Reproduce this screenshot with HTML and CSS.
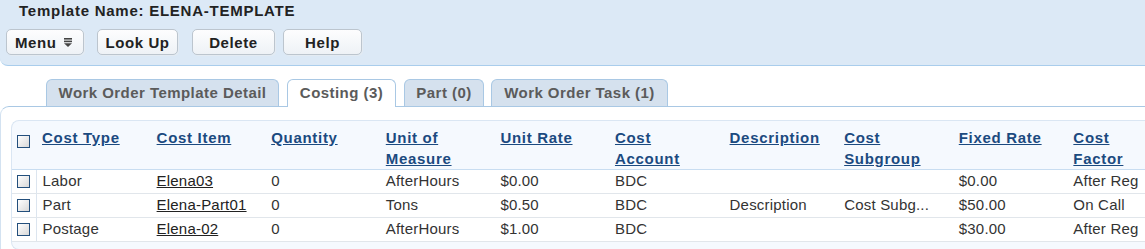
FILE: index.html
```html
<!DOCTYPE html>
<html lang="en">
<head>
    <meta charset="utf-8"/>
    <title>Work Order Template - Costing</title>
    <link rel="stylesheet" href="styles.css">
</head>
<body>
<div class="headerPanel">
    <div class="title">Template Name: ELENA-TEMPLATE</div>
    <div class="toolbar">
        <button class="btn btnMenu">Menu
            <svg class="menuIcon" width="8" height="9" viewBox="0 0 8 9">
                <rect x="0" y="0" width="8" height="1.6" fill="#444"/>
                <rect x="0" y="2.6" width="8" height="1.6" fill="#444"/>
                <polygon points="0,5.2 8,5.2 4,9" fill="#444"/>
            </svg>
        </button>
        <button class="btn btnLookUp">Look Up</button>
        <button class="btn btnDelete">Delete</button>
        <button class="btn btnHelp">Help</button>
    </div>
</div>

<div class="tabs">
    <div class="tab tabDetail">Work Order Template Detail</div>
    <div class="tab tabActive tabCosting">Costing (3)</div>
    <div class="tab tabPart">Part (0)</div>
    <div class="tab tabTask">Work Order Task (1)</div>
</div>

<div class="content">
    <div class="gridPanel">
        <table class="grid">
            <colgroup>
                <col class="colCheck">
                <col span="9" class="colData">
                <col class="colLast">
            </colgroup>
            <thead>
            <tr>
                <th class="checkCell"><span class="check"></span></th>
                <th><a href="#">Cost Type</a></th>
                <th><a href="#">Cost Item</a></th>
                <th><a href="#">Quantity</a></th>
                <th><a href="#">Unit of Measure</a></th>
                <th><a href="#">Unit Rate</a></th>
                <th><a href="#">Cost Account</a></th>
                <th><a href="#">Description</a></th>
                <th><a href="#">Cost Subgroup</a></th>
                <th><a href="#">Fixed Rate</a></th>
                <th><a href="#">Cost Factor</a></th>
            </tr>
            </thead>
            <tbody>
            <tr>
                <td class="checkCell"><span class="check"></span></td>
                <td>Labor</td>
                <td><a href="#">Elena03</a></td>
                <td>0</td>
                <td>AfterHours</td>
                <td>$0.00</td>
                <td>BDC</td>
                <td></td>
                <td></td>
                <td>$0.00</td>
                <td>After Reg</td>
            </tr>
            <tr>
                <td class="checkCell"><span class="check"></span></td>
                <td>Part</td>
                <td><a href="#">Elena-Part01</a></td>
                <td>0</td>
                <td>Tons</td>
                <td>$0.50</td>
                <td>BDC</td>
                <td>Description</td>
                <td>Cost Subg...</td>
                <td>$50.00</td>
                <td>On Call</td>
            </tr>
            <tr>
                <td class="checkCell"><span class="check"></span></td>
                <td>Postage</td>
                <td><a href="#">Elena-02</a></td>
                <td>0</td>
                <td>AfterHours</td>
                <td>$1.00</td>
                <td>BDC</td>
                <td></td>
                <td></td>
                <td>$30.00</td>
                <td>After Reg</td>
            </tr>
            </tbody>
        </table>
    </div>
</div>
</body>
</html>
```

FILE: styles.css
```css
body{
    margin: 0;
    width: 1145px;
    overflow: hidden;
    font-family: "Liberation Sans", Arial, sans-serif;
    font-size: 15px;
    letter-spacing: 0.2px;
    color: #333;
    background: #fff;
}
.headerPanel{
    background: #dce9f6;
    border-bottom: 1px solid #a9cdec;
    border-bottom-left-radius: 8px;
    padding: 2px 0 10px 0;
}
.title{
    font-weight: bold;
    letter-spacing: 0.75px;
    line-height: 18px;
    padding-left: 19px;
    color: #222;
}
.toolbar{
    display: flex;
    margin-top: 9px;
    padding-left: 6px;
}
.btn{
    height: 26px;
    font-family: inherit;
    font-size: 15px;
    font-weight: bold;
    letter-spacing: 0.6px;
    color: #222;
    background: linear-gradient(#fdfdfe, #eef2f6);
    border: 1px solid #bcc5ce;
    border-radius: 5px;
    box-shadow: 1px 1px 0 #e4ebf2;
    padding: 0;
    display: flex;
    align-items: center;
    justify-content: center;
}
.btnMenu{
    width: 78px;
    justify-content: flex-start;
    padding-left: 8px;
}
.menuIcon{
    margin-left: 7px;
    margin-top: 1px;
}
.btnLookUp{
    width: 81px;
    margin-left: 13px;
}
.btnDelete{
    width: 83px;
    margin-left: 14px;
}
.btnHelp{
    width: 79px;
    margin-left: 8px;
}
.tabs{
    display: flex;
    margin-top: 13px;
    padding-left: 46px;
    gap: 8px;
    position: relative;
    z-index: 1;
}
.tab{
    height: 21px;
    line-height: 16px;
    padding: 5px 0 0 0;
    text-align: center;
    font-weight: bold;
    letter-spacing: 0.45px;
    color: #5b5b5b;
    background: #d5e1ee;
    border: 1px solid #a9c8e4;
    border-bottom: none;
    border-top-left-radius: 6px;
    border-top-right-radius: 6px;
    margin-bottom: -1px;
}
.tabActive{
    background: #fff;
    height: 22px;
}
.tabDetail{
    width: 231px;
}
.tabCosting{
    width: 107px;
}
.tabPart{
    width: 78px;
}
.tabTask{
    width: 175px;
    margin-left: -1px;
}
.content{
    border-top: 1px solid #a9c8e4;
    border-left: 1px solid #d3e2f1;
    border-top-left-radius: 9px;
    padding: 13px 0 0 10px;
}
.gridPanel{
    background: #f5f9fe;
    border: 1px solid #dae6f3;
    border-right: none;
    border-radius: 8px 0 0 8px;
    padding-bottom: 7px;
}
.grid{
    border-collapse: collapse;
    table-layout: fixed;
    width: 1133px;
}
.colCheck{
    width: 24px;
}
.colData{
    width: 114.6px;
}
.colLast{
    width: 77.6px;
}
.grid thead tr{
    height: 48px;
}
.grid th{
    text-align: left;
    vertical-align: top;
    font-weight: bold;
    letter-spacing: 0.7px;
    line-height: 20.5px;
    padding: 7px 6px 0 6px;
    border-bottom: 1px solid #c8ddf1;
}
.grid th a{
    color: #1b4a80;
    text-decoration: underline;
}
.grid th.checkCell{
    padding: 14px 0 0 5px;
}
.grid tbody tr{
    height: 24px;
}
.grid td{
    background: #fff;
    line-height: 17px;
    padding: 2px 6px 0 6px;
    border-bottom: 1px solid #e1e6eb;
    white-space: nowrap;
    vertical-align: top;
}
.grid td a{
    color: #222;
    text-decoration: underline;
}
.grid td:last-child{
    padding-right: 0;
}
.grid td.checkCell{
    padding: 5px 0 0 5px;
    border-right: 1px solid #dce5ef;
}
.check{
    display: block;
    width: 11px;
    height: 11px;
    border: 1px solid #234f7c;
    background: linear-gradient(135deg, #ffffff, #d8d8d8);
}
```
